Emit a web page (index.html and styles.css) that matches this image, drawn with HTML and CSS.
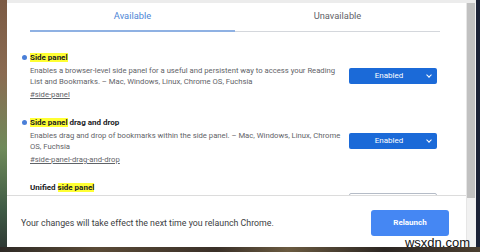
FILE: index.html
```html
<!DOCTYPE html>
<html lang="en">
<head>
    <meta charset="UTF-8">
    <meta name="viewport" content="width=device-width, initial-scale=1.0">
    <title>Experiments</title>
    <link rel="stylesheet" href="styles.css">
</head>
<body>
    <div class="desk">
        <div class="photo-left"></div>
        <div class="window">
            <div class="topbar"></div>
            <div class="body">
                <div class="main">
                    <div class="tabs">
                        <div class="tab active">Available</div>
                        <div class="tab">Unavailable</div>
                    </div>
                    <div class="list">
                        <div class="flag">
                            <div class="info">
                                <div class="title"><span class="dot"></span><mark>Side panel</mark></div>
                                <div class="desc">Enables a browser-level side panel for a useful and persistent way to access your Reading List and Bookmarks. – Mac, Windows, Linux, Chrome OS, Fuchsia</div>
                                <a class="link">#side-panel</a>
                            </div>
                            <div class="select">Enabled<span class="chev"></span></div>
                        </div>
                        <div class="flag">
                            <div class="info">
                                <div class="title"><span class="dot"></span><mark>Side panel</mark> drag and drop</div>
                                <div class="desc">Enables drag and drop of bookmarks within the side panel. – Mac, Windows, Linux, Chrome OS, Fuchsia</div>
                                <a class="link">#side-panel-drag-and-drop</a>
                            </div>
                            <div class="select">Enabled<span class="chev"></span></div>
                        </div>
                        <div class="flag last">
                            <div class="info">
                                <div class="title">Unified <mark>side panel</mark></div>
                            </div>
                            <div class="select plain"></div>
                        </div>
                    </div>
                    <div class="footer">
                        <div class="note">Your changes will take effect the next time you relaunch Chrome.</div>
                        <div class="relaunch">Relaunch</div>
                    </div>
                </div>
                <div class="scrollbar"><div class="thumb"></div></div>
            </div>
        </div>
        <div class="photo-right"></div>
    </div>
    <div class="photo-bottom"></div>
    <div class="mark">wsxdn.com</div>
</body>
</html>
```
FILE: styles.css
```css
body{
    margin: 0px;
    padding: 0px;
    width: 480px;
    height: 252px;
    overflow: hidden;
    background-color: #2a2420;
    font-family: Roboto, "Liberation Sans", sans-serif;
    position: relative;
}
.desk{
    display: flex;
    height: 247px;
}
.photo-left{
    width: 7px;
    background: linear-gradient(#7b5a44, #8a6b52 30%, #6f8a5a 60%, #3f5a45 85%, #2f3a35);
}
.photo-right{
    width: 4px;
    background-color: #1b2236;
}
.photo-bottom{
    height: 5px;
    background: linear-gradient(90deg, #2e2a26, #5a4a36 20%, #3a3028 45%, #6a5a40 60%, #2c2622 80%, #4a3e30);
}
.window{
    flex: 1;
    display: flex;
    flex-direction: column;
    background-color: white;
    font-size: 8px;
}
.topbar{
    height: 3px;
    background-color: #ececec;
}
.body{
    flex: 1;
    display: flex;
    min-height: 0;
}
.main{
    flex: 1;
    display: flex;
    flex-direction: column;
    min-width: 0;
}
.scrollbar{
    width: 9px;
    background-color: #f1f1f1;
    border-left: 1px solid #e6e6e6;
}
.thumb{
    width: 8px;
    height: 195px;
    background-color: #c1c1c1;
}
.tabs{
    display: flex;
    margin: 0 26px 0 23px;
    border-bottom: 1px solid #d4d7dc;
}
.tab{
    flex: 1;
    text-align: center;
    font-size: 9.3px;
    color: #5f6368;
    padding: 6px 0 7px;
    line-height: 14px;
}
.tab.active{
    color: #4d86d6;
    border-bottom: 2px solid #8fb1e3;
    margin-bottom: -1px;
}
.list{
    flex: 1;
    overflow: hidden;
    padding: 20px 29px 0 15px;
}
.flag{
    display: flex;
    align-items: flex-start;
    margin-bottom: 17px;
}
.info{
    flex: 1;
    min-width: 0;
    padding-right: 8px;
}
.title{
    font-size: 8px;
    font-weight: bold;
    color: #202124;
    line-height: 12px;
    position: relative;
    padding-left: 8px;
}
.title mark{
    background-color: #ffff33;
    color: #202124;
}
.dot{
    position: absolute;
    left: 0px;
    top: 3px;
    width: 5px;
    height: 5px;
    border-radius: 50%;
    background-color: #4a7fd8;
}
.desc{
    font-size: 7.7px;
    color: #5f6368;
    line-height: 11px;
    padding-left: 8px;
    margin-top: 1px;
}
.link{
    display: block;
    font-size: 7.7px;
    color: #5f6368;
    text-decoration: underline;
    line-height: 11px;
    padding-left: 8px;
    margin-top: 2px;
}
.select{
    width: 88px;
    height: 16px;
    margin-top: 16px;
    background-color: #1b6ad8;
    color: white;
    font-size: 8px;
    line-height: 16px;
    text-align: center;
    text-indent: -8px;
    position: relative;
    border-radius: 2px;
    box-sizing: border-box;
}
.chev{
    position: absolute;
    right: 6px;
    top: 5px;
    width: 3px;
    height: 3px;
    border-right: 1.5px solid white;
    border-bottom: 1.5px solid white;
    transform: rotate(45deg);
}
.select.plain{
    background-color: white;
    border: 1px solid #b5bcc7;
    margin-top: 11px;
}
.footer{
    height: 48px;
    padding-top: 3px;
    border-top: 1px solid #dcdcdc;
    display: flex;
    align-items: center;
    justify-content: space-between;
    padding-left: 14px;
    padding-right: 17px;
}
.note{
    font-size: 8.8px;
    color: #3c4043;
}
.relaunch{
    width: 78px;
    height: 26px;
    line-height: 26px;
    text-align: center;
    background-color: #4587f3;
    color: white;
    font-size: 8px;
    font-weight: bold;
    border-radius: 3px;
}
.mark{
    position: absolute;
    right: 9px;
    bottom: 3px;
    font-family: "Liberation Sans", Arial, sans-serif;
    font-size: 13px;
    color: #111;
    line-height: 12px;
    padding: 0 1px;
}
```
